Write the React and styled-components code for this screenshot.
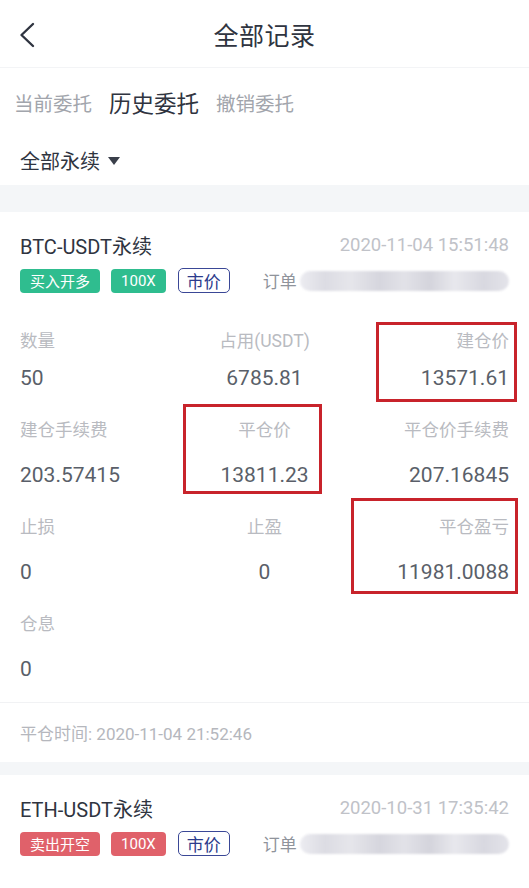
import styled, { createGlobalStyle, css } from "styled-components";

const GlobalStyle = createGlobalStyle`
  body {
    margin: 0;
    background: #ffffff;
    font-family: Roboto, "Noto Sans CJK SC", sans-serif;
  }
`;

const orders = [
  {
    id: 1,
    symbol: "BTC-USDT永续",
    time: "2020-11-04 15:51:48",
    side: "买入开多",
    tone: "buy",
    closeTime: "2020-11-04 21:52:46",
    rows: [
      [
        { label: "数量", value: "50" },
        { label: "占用(USDT)", value: "6785.81" },
        { label: "建仓价", value: "13571.61", mark: "a" },
      ],
      [
        { label: "建仓手续费", value: "203.57415" },
        { label: "平仓价", value: "13811.23", mark: "b" },
        { label: "平仓价手续费", value: "207.16845" },
      ],
      [
        { label: "止损", value: "0" },
        { label: "止盈", value: "0" },
        { label: "平仓盈亏", value: "11981.0088", mark: "c" },
      ],
      [{ label: "仓息", value: "0" }],
    ],
  },
  {
    id: 2,
    symbol: "ETH-USDT永续",
    time: "2020-10-31 17:35:42",
    side: "卖出开空",
    tone: "sell",
    rows: [],
  },
];

export default function App() {
  return (
    <Page>
      <GlobalStyle />
      <Header>
        <Back>
          <svg width="16" height="26" viewBox="0 0 16 26">
            <polyline points="14,2 2.5,13 14,24" fill="none" stroke="#2f3440" strokeWidth="2.4" strokeLinecap="round" strokeLinejoin="round" />
          </svg>
        </Back>
        <Title>全部记录</Title>
      </Header>

      <Tabs>
        <Tab>当前委托</Tab>
        <Tab active>历史委托</Tab>
        <Tab>撤销委托</Tab>
      </Tabs>

      <Filter>
        全部永续
        <Caret />
      </Filter>

      <Band />

      {orders.map((o) => (
        <Card key={o.id}>
          <CardHead>
            <Symbol>{o.symbol}</Symbol>
            <Time>{o.time}</Time>
          </CardHead>
          <TagRow>
            <Tag tone={o.tone}>{o.side}</Tag>
            <Tag tone={o.tone}>100X</Tag>
            <Tag outline>市价</Tag>
            <Order>
              订单
              <Blur />
            </Order>
          </TagRow>

          {o.rows.length > 0 && (
            <Grid>
              {o.rows.map((row, i) => (
                <Row key={i}>
                  {row.map((cell, j) => (
                    <Cell key={j} align={j === 0 ? "left" : j === 1 ? "center" : "right"}>
                      <Label>{cell.label}</Label>
                      <Value first={i === 0}>{cell.value}</Value>
                      {cell.mark && <Mark kind={cell.mark} />}
                    </Cell>
                  ))}
                </Row>
              ))}
            </Grid>
          )}

          {o.closeTime && <Footer>平仓时间: {o.closeTime}</Footer>}
          {o.closeTime && <Band small />}
        </Card>
      ))}
    </Page>
  );
}

const Page = styled.div`
  width: 529px;
  height: 888px;
  overflow: hidden;
  background: #fff;
`;

const Header = styled.div`
  height: 68px;
  position: relative;
  display: flex;
  align-items: center;
  justify-content: center;
  border-bottom: 1px solid #f3f4f6;
  box-sizing: border-box;
`;

const Back = styled.div`
  position: absolute;
  left: 19px;
  top: 22px;
  display: flex;
`;

const Title = styled.div`
  font-size: 25px;
  color: #2f3440;
  letter-spacing: 0.5px;
`;

const Tabs = styled.div`
  height: 68px;
  display: flex;
  align-items: center;
  gap: 17px;
  padding-left: 14px;
`;

const Tab = styled.div`
  font-size: ${(p) => (p.active ? "22.5px" : "19.5px")};
  color: ${(p) => (p.active ? "#2f3440" : "#a2a5ac")};
`;

const Filter = styled.div`
  height: 49px;
  display: flex;
  align-items: center;
  padding-left: 20px;
  font-size: 20px;
  color: #2f3440;
  gap: 8px;
`;

const Caret = styled.span`
  width: 0;
  height: 0;
  border-left: 6px solid transparent;
  border-right: 6px solid transparent;
  border-top: 8px solid #3a3f4a;
`;

const Band = styled.div`
  height: ${(p) => (p.small ? "13px" : "27px")};
  background: #f4f6f8;
`;

const Card = styled.div`
  display: flex;
  flex-direction: column;
`;

const CardHead = styled.div`
  display: flex;
  justify-content: space-between;
  align-items: center;
  padding: 21px 20px 0;
  height: 24px;
`;

const Symbol = styled.div`
  font-size: 20px;
  color: #2f3440;
`;

const Time = styled.div`
  font-size: 18.5px;
  color: #c0c2c8;
`;

const TagRow = styled.div`
  display: flex;
  align-items: center;
  padding: 11px 20px 0;
  gap: 11px;
`;

const Tag = styled.div`
  height: 24px;
  box-sizing: border-box;
  padding: 0 10px;
  border-radius: 4px;
  display: flex;
  align-items: center;
  font-size: 15px;
  color: #fff;
  background: ${(p) => (p.tone === "sell" ? "#e0616a" : "#2fbd8f")};
  ${(p) =>
    p.outline &&
    css`
      background: #fff;
      color: #2c3b8c;
      border: 1.5px solid #3a4796;
      border-radius: 5px;
      padding: 0 8px;
      height: 25px;
      font-size: 17px;
      margin-left: 1px;
    `}
`;

const Order = styled.div`
  margin-left: 22px;
  display: flex;
  align-items: center;
  font-size: 17px;
  color: #8f939b;
  flex: 1;
`;

const Blur = styled.div`
  flex: 1;
  height: 20px;
  margin-left: 3px;
  border-radius: 10px;
  background: linear-gradient(
    90deg,
    #ececf1 0%,
    #dcdce3 12%,
    #e6e6eb 24%,
    #d6d6de 38%,
    #e2e2e8 50%,
    #d4d4dc 62%,
    #e8e8ed 74%,
    #d8d8e0 88%,
    #e4e4ea 100%
  );
  filter: blur(1px);
`;

const Grid = styled.div`
  display: flex;
  flex-direction: column;
  padding: 0 20px;
  margin-top: 37px;
  border-bottom: 1px solid #f1f2f4;
`;

const Row = styled.div`
  display: grid;
  grid-template-columns: 1fr 1fr 1fr;
  padding-bottom: 29px;

  &:last-child {
    padding-bottom: 21px;
  }
`;

const Cell = styled.div`
  position: relative;
  display: flex;
  flex-direction: column;
  align-items: ${(p) =>
    p.align === "left" ? "flex-start" : p.align === "center" ? "center" : "flex-end"};
`;

const Label = styled.div`
  font-size: 17.5px;
  line-height: 22px;
  color: #b9bbc1;
`;

const Value = styled.div`
  font-size: 21px;
  line-height: 24px;
  color: #5a5f69;
  margin-top: ${(p) => (p.first ? "14px" : "22px")};
`;

const markBoxes = {
  a: css`
    left: 30px;
    right: -8px;
    top: -8px;
    height: 80px;
  `,
  b: css`
    left: 0;
    right: 24px;
    top: -15px;
    height: 90px;
  `,
  c: css`
    left: 5px;
    right: -9px;
    top: -18px;
    height: 96px;
  `,
};

const Mark = styled.div`
  position: absolute;
  border: 3px solid #c8232b;
  box-sizing: border-box;
  pointer-events: none;
  ${(p) => markBoxes[p.kind]}
`;

const Footer = styled.div`
  height: 59px;
  display: flex;
  align-items: center;
  padding-left: 20px;
  font-size: 17px;
  color: #b5b7bd;
`;
